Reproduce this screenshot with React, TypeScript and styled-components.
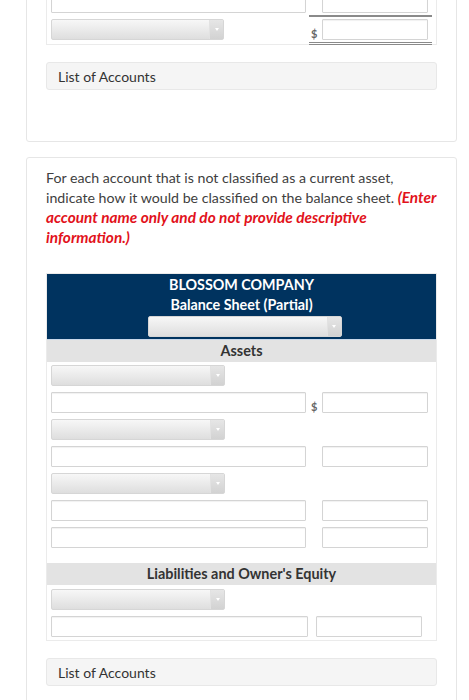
import styled, { createGlobalStyle } from "styled-components";

const GlobalStyle = createGlobalStyle`
  html, body {
    margin: 0;
    padding: 0;
    background: #ffffff;
    font-family: Lato, "Open Sans", "Liberation Sans", sans-serif;
    color: #333;
  }
  * { box-sizing: border-box; }
`;

const Page = styled.div`
  width: 469px;
  height: 700px;
  overflow: hidden;
  padding: 0 12px 0 26px;
  display: flex;
  flex-direction: column;
  gap: 15px;
`;

const Card = styled.div<{ $offset?: number }>`
  margin-top: ${(p) => p.$offset ?? 0}px;
  border: 1px solid #e6e6e6;
  border-radius: 3px;
  background: #fff;
  padding: 10px 19px 51px;
`;

const Prompt = styled.p`
  margin: 0 0 25px;
  font-size: 14.2px;
  line-height: 20px;
  color: #404040;
`;

const Emph = styled.strong`
  color: #e2121b;
  font-style: italic;
  font-weight: 700;
  font-size: 15.4px;
  line-height: 1;
`;

const Sheet = styled.div`
  border: 1px solid #ebebeb;
`;

const TopSheet = styled(Sheet)`
  border-top: none;
`;

const SheetHead = styled.div`
  background: #00335f;
  color: #fff;
  text-align: center;
  font-size: 14.3px;
  font-weight: 700;
  line-height: 20px;
  padding: 1px 0 2px;
  border-bottom: 1px solid #c9d8ea;
  display: flex;
  flex-direction: column;
  align-items: center;
`;

const HeadLine = styled.div`
  font-weight: 700;
`;

const HeadSelect = styled.div`
  margin: 1px 0 0 6px;
`;

const SectionBar = styled.div`
  background: #e3e3e3;
  text-align: center;
  font-size: 14.4px;
  font-weight: 700;
  line-height: 22px;
  color: #333;
`;

const SheetBody = styled.div<{ $top?: number; $bottom?: number }>`
  display: flex;
  flex-direction: column;
  gap: 6px;
  padding: ${(p) => p.$top ?? 3}px 4px ${(p) => p.$bottom ?? 3}px;
`;

const Row = styled.div`
  display: flex;
  align-items: flex-start;
  height: 21px;
`;

const Select = styled.div<{ $width?: number }>`
  width: ${(p) => p.$width ?? 174}px;
  height: 21px;
  border-radius: 2px;
  border: 1px solid #d6d6d6;
  background: linear-gradient(#f7f7f7, #dedede);
  display: flex;
  justify-content: flex-end;
`;

const SelectArrow = styled.div`
  width: 14px;
  height: 100%;
  background: linear-gradient(#e6e6e6, #d2d2d2);
  border-left: 1px solid #e2e2e2;
  display: flex;
  align-items: center;
  justify-content: center;
  &::after {
    content: "";
    border-left: 2px solid transparent;
    border-right: 2px solid transparent;
    border-top: 3px solid #fff;
  }
`;

const TextBox = styled.div<{ $width: number }>`
  width: ${(p) => p.$width}px;
  height: 21px;
  border: 1px solid #d4d4d4;
  border-radius: 1px;
  background: #fff;
  box-shadow: inset 0 1px 1px rgba(0, 0, 0, 0.06);
`;

const AmountCell = styled.div<{ $rule?: "single" | "double"; $lead?: number }>`
  margin-left: ${(p) => p.$lead ?? 3}px;
  display: flex;
  align-items: flex-end;
  gap: 3px;
  padding: 0 4px 2px 2px;
  border-bottom: ${(p) =>
    p.$rule === "double"
      ? "3px double #8a8a8a"
      : p.$rule === "single"
      ? "2px solid #8a8a8a"
      : "none"};
`;

const Dollar = styled.span<{ $show: boolean }>`
  width: 8px;
  font-size: 11px;
  font-weight: 700;
  line-height: 12px;
  color: #666;
  visibility: ${(p) => (p.$show ? "visible" : "hidden")};
`;

const AccountsBar = styled.div<{ $top: number }>`
  margin-top: ${(p) => p.$top}px;
  height: 28px;
  background: #f5f5f5;
  border: 1px solid #e8e8e8;
  border-radius: 3px;
  padding: 0 11px;
  display: flex;
  align-items: center;
  font-size: 14px;
  color: #333;
`;

const Dropdown = ({ width }: { width?: number }) => (
  <Select $width={width}>
    <SelectArrow />
  </Select>
);

const EntryRow = ({
  dollar = false,
  rule,
  narrow = false,
}: {
  dollar?: boolean;
  rule?: "single" | "double";
  narrow?: boolean;
}) => (
  <Row>
    <TextBox $width={257} />
    {narrow ? (
      <AmountCell $lead={6}>
        <TextBox $width={106} />
      </AmountCell>
    ) : (
      <AmountCell $rule={rule}>
        <Dollar $show={dollar}>$</Dollar>
        <TextBox $width={106} />
      </AmountCell>
    )}
  </Row>
);

const DropRow = ({ amount = false }: { amount?: boolean }) => (
  <Row>
    <Dropdown />
    {amount && (
      <AmountCell $rule="double" $lead={85}>
        <Dollar $show>$</Dollar>
        <TextBox $width={106} />
      </AmountCell>
    )}
  </Row>
);

export default function App() {
  return (
    <>
      <GlobalStyle />
      <Page>
        <Card $offset={-29}>
          <TopSheet>
            <SheetBody $top={10} $bottom={4}>
              <EntryRow rule="single" />
              <DropRow amount />
            </SheetBody>
          </TopSheet>
          <AccountsBar $top={17}>List of Accounts</AccountsBar>
        </Card>

        <Card>
          <Prompt>
            For each account that is not classified as a current asset,
            indicate how it would be classified on the balance sheet.{" "}
            <Emph>
              (Enter account name only and do not provide descriptive
              information.)
            </Emph>
          </Prompt>
          <Sheet>
            <SheetHead>
              <HeadLine>BLOSSOM COMPANY</HeadLine>
              <HeadLine>Balance Sheet (Partial)</HeadLine>
              <HeadSelect>
                <Dropdown width={194} />
              </HeadSelect>
            </SheetHead>
            <SectionBar>Assets</SectionBar>
            <SheetBody $top={3} $bottom={15}>
              <DropRow />
              <EntryRow dollar />
              <DropRow />
              <EntryRow />
              <DropRow />
              <EntryRow />
              <EntryRow />
            </SheetBody>
            <SectionBar>Liabilities and Owner's Equity</SectionBar>
            <SheetBody $top={4} $bottom={3}>
              <DropRow />
              <EntryRow narrow />
            </SheetBody>
          </Sheet>
          <AccountsBar $top={17}>List of Accounts</AccountsBar>
        </Card>
      </Page>
    </>
  );
}
